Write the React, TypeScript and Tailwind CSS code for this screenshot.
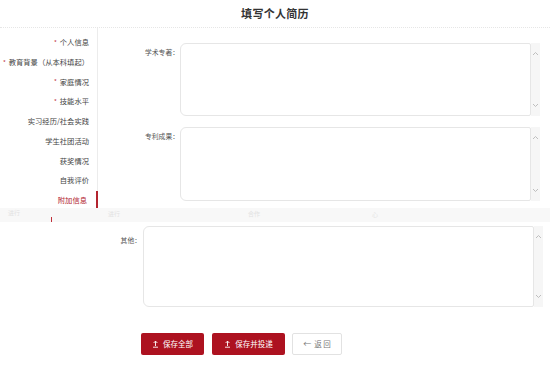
import React from "react";

const navItems: { t: string; req?: boolean; active?: boolean }[] = [
  { t: "个人信息", req: true },
  { t: "教育背景（从本科填起）", req: true },
  { t: "家庭情况", req: true },
  { t: "技能水平", req: true },
  { t: "实习经历/社会实践" },
  { t: "学生社团活动" },
  { t: "获奖情况" },
  { t: "自我评价" },
  { t: "附加信息", active: true },
];

function Scrollbar({ up = 11, down = 11 }: { up?: number; down?: number }) {
  return (
    <div className="w-[9px] bg-[#f6f6f6] flex flex-col justify-between items-center py-[8px]">
      <svg width="7" height="5" viewBox="0 0 7 5" style={{ marginTop: up - 11 }}>
        <path d="M1 4 L3.5 1.5 L6 4" fill="none" stroke="#b8b8b8" strokeWidth="0.9" />
      </svg>
      <svg width="7" height="5" viewBox="0 0 7 5" style={{ marginBottom: down - 11 }}>
        <path d="M1 1 L3.5 3.5 L6 1" fill="none" stroke="#b8b8b8" strokeWidth="0.9" />
      </svg>
    </div>
  );
}

function UploadIcon() {
  return (
    <svg width="7" height="8" viewBox="0 0 7 8" className="mr-[4px]">
      <path d="M3.5 6 V1.2 M1.6 3 L3.5 1.1 L5.4 3" fill="none" stroke="#fff" strokeWidth="0.9" />
      <path d="M1 7.2 H6" stroke="#fff" strokeWidth="0.9" />
    </svg>
  );
}

export default function App() {
  return (
    <div
      className="w-[550px] h-[367px] bg-white overflow-hidden text-[#333]"
      style={{ fontFamily: '"Noto Sans CJK SC", "Noto Sans", sans-serif' }}
    >
      {/* header */}
      <div className="h-[28px] border-b border-dotted border-[#e6e6e6] flex items-center justify-center">
        <span className="text-[11px] font-bold text-[#333] tracking-[0.3px]">填写个人简历</span>
      </div>

      {/* top section */}
      <div className="h-[180px] overflow-hidden flex">
        <div className="w-[98px] border-r border-[#ececec] pt-[5px] shrink-0">
          {navItems.map((n) => (
            <div
              key={n.t}
              className={
                "h-[19.75px] flex items-center justify-end pr-[9px] text-[7.3px] leading-none -mr-px " +
                (n.active ? "text-[#b3242f] border-r-2 border-[#b3242f]" : "text-[#444]")
              }
            >
              {n.req && <span className="text-[#c0303a] mr-[3px] text-[6px]">*</span>}
              {n.t}
            </div>
          ))}
        </div>
        <div className="flex-1 pt-[15px] flex flex-col gap-[11px]">
          {[
            { l: "学术专著：", h: 73 },
            { l: "专利成果：", h: 74 },
          ].map((r) => (
            <div key={r.l} className="flex" style={{ height: r.h }}>
              <div className="w-[82px] text-right text-[6.8px] text-[#555] pt-[4px] pr-[1px]">{r.l}</div>
              <div className="w-[351px] border border-[#e6e6e6] rounded-l-[6px] rounded-r-[2px] bg-white" />
              <Scrollbar />
            </div>
          ))}
        </div>
      </div>

      {/* strip */}
      <div className="h-[14px] bg-[#f8f8f8] relative">
        <span className="absolute left-[8px] top-[0px] text-[6px] text-[#e2e2e2]">进行</span>
        <span className="absolute left-[108px] top-[1px] text-[6px] text-[#e2e2e2]">进行</span>
        <span className="absolute left-[248px] top-[1px] text-[6px] text-[#e2e2e2]">合作</span>
        <span className="absolute left-[372px] top-[2px] text-[6px] text-[#e6e6e6]">心</span>
        <span className="absolute left-[51px] top-[9px] w-px h-[5px] bg-[#c0303a]" />
      </div>

      {/* bottom section */}
      <div className="flex mt-[4px] h-[81px]">
        <div className="w-[143px] text-right text-[6.8px] text-[#555] pt-[9px] pr-[2px]">其他：</div>
        <div className="w-[391px] border border-[#e6e6e6] rounded-l-[6px] rounded-r-[2px] bg-white" />
        <Scrollbar />
      </div>

      {/* buttons */}
      <div className="flex mt-[26px] pl-[141px] gap-[8px]">
        <button className="w-[63px] h-[22px] bg-[#ad1220] rounded-[2px] text-white text-[7.5px] flex items-center justify-center">
          <UploadIcon />
          保存全部
        </button>
        <button className="w-[73px] h-[22px] bg-[#ad1220] rounded-[2px] text-white text-[7.5px] flex items-center justify-center">
          <UploadIcon />
          保存并投递
        </button>
        <button className="w-[50px] h-[22px] bg-white border border-[#e2e2e2] rounded-[2px] text-[#777] text-[7.5px] flex items-center justify-center -ml-[1px]">
          <span className="mr-[3px] text-[8px]">←</span>返 回
        </button>
      </div>
    </div>
  );
}
